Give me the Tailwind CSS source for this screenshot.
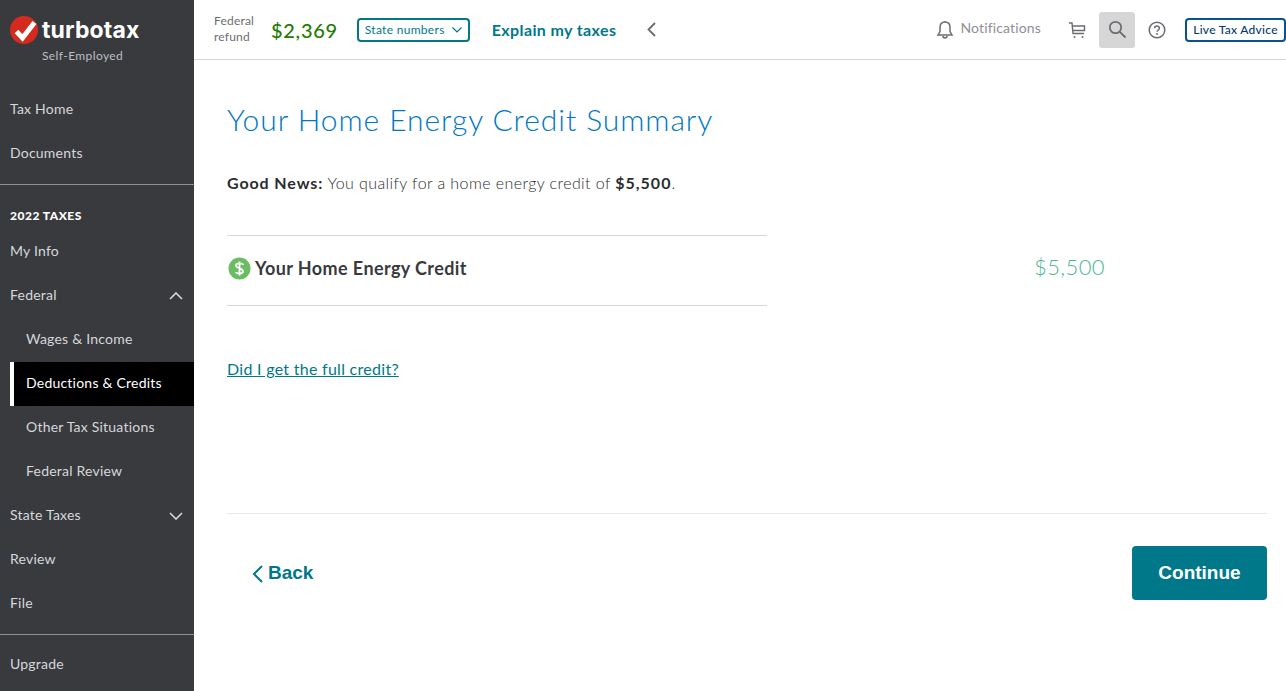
<!DOCTYPE html>
<html>
<head>
<meta charset="utf-8">
<script src="https://cdn.jsdelivr.net/npm/@tailwindcss/browser@4"></script>
</head>
<body class="m-0 bg-white font-['Lato','Noto_Sans',sans-serif] overflow-hidden">
<div class="flex w-[1286px] h-[691px]">
  <aside class="w-[194px] h-full shrink-0 bg-[#393a3d] text-[#d4d7dc] text-[14px] tracking-[0.22px] flex flex-col">
    <div class="h-[87px] pl-[10px] pt-[15px] shrink-0">
      <div class="flex items-center h-[30px]">
        <svg width="28" height="28" viewBox="0 0 28 28" class="shrink-0"><circle cx="14" cy="14" r="14" fill="#d52b1e"/><path d="M6.5 15.5 L12.5 22 L24.5 6.5" fill="none" stroke="#fff" stroke-width="5"/></svg>
        <span class="ml-[4px] text-[23px] font-bold text-white leading-none font-['Inter',sans-serif] tracking-[0.15px]">turbotax</span>
      </div>
      <div class="pl-[32px] mt-[3px] text-[12px] leading-[16px] text-[#babec5] tracking-[0.4px]">Self-Employed</div>
    </div>
    <a class="h-[44px] pb-[2px] flex items-center pl-[10px] shrink-0">Tax Home</a>
    <a class="h-[44px] pb-[2px] flex items-center pl-[10px] shrink-0">Documents</a>
    <div class="h-px bg-[#8d9096] mt-[9px] shrink-0"></div>
    <div class="h-[30px] mt-[16px] flex items-center pl-[10px] text-[12px] font-black text-white tracking-[0.5px] shrink-0">2022 TAXES</div>
    <a class="h-[44px] mt-[-1px] pb-[3px] flex items-center pl-[10px] shrink-0">My Info</a>
    <a class="h-[44px] flex items-center justify-between pl-[10px] pr-[11px] shrink-0"><span class="mb-[3px]">Federal</span>
      <svg width="14" height="8" viewBox="0 0 14 8"><path d="M1 7 L7 1 L13 7" fill="none" stroke="#d4d7dc" stroke-width="1.6"/></svg></a>
    <a class="h-[44px] pb-[3px] flex items-center pl-[26px] shrink-0">Wages &amp; Income</a>
    <a class="h-[44px] pb-[3px] flex items-center pl-[12px] ml-[10px] bg-black text-white border-l-4 border-white shrink-0">Deductions &amp; Credits</a>
    <a class="h-[44px] pb-[3px] flex items-center pl-[26px] shrink-0">Other Tax Situations</a>
    <a class="h-[44px] pb-[3px] flex items-center pl-[26px] shrink-0">Federal Review</a>
    <a class="h-[44px] flex items-center justify-between pl-[10px] pr-[11px] shrink-0"><span class="mb-[3px]">State Taxes</span>
      <svg width="14" height="8" viewBox="0 0 14 8"><path d="M1 1 L7 7 L13 1" fill="none" stroke="#d4d7dc" stroke-width="1.6"/></svg></a>
    <a class="h-[44px] pb-[3px] flex items-center pl-[10px] shrink-0">Review</a>
    <a class="h-[44px] pb-[3px] flex items-center pl-[10px] shrink-0">File</a>
    <div class="h-px bg-[#8d9096] mt-[8px] shrink-0"></div>
    <a class="h-[44px] mt-[8px] pb-[3px] flex items-center pl-[10px] shrink-0">Upgrade</a>
  </aside>
  <div class="flex-1 min-w-0 flex flex-col">
    <header class="h-[60px] shrink-0 border-b border-[#d4d7dc] flex items-center pl-[20px] pr-0">
      <div class="w-[42px] text-[12px] leading-[16px] text-[#6b6c72] mt-[-1px] tracking-[0.2px]">Federal refund</div>
      <div class="ml-[15px] text-[20px] font-medium text-[#237a00] tracking-[0.7px] leading-none">$2,369</div>
      <button class="ml-[19px] w-[113px] h-[24px] border-2 border-[#00788a] rounded-[4px] flex items-center pl-[6px] text-[12px] text-[#00788a] tracking-[0.3px]">State numbers
        <svg class="ml-[7px]" width="10" height="6" viewBox="0 0 10 6"><path d="M0.5 0.5 L5 5 L9.5 0.5" fill="none" stroke="#00788a" stroke-width="1.2"/></svg></button>
      <a class="ml-[22px] text-[16px] font-bold text-[#00788a] leading-none tracking-[0.38px]">Explain my taxes</a>
      <svg class="ml-[31px]" width="9" height="15" viewBox="0 0 9 15"><path d="M8 1 L1.5 7.5 L8 14" fill="none" stroke="#6b6c72" stroke-width="1.8"/></svg>
      <div class="ml-auto flex items-center">
        <svg width="18" height="20" viewBox="0 0 18 20"><path d="M9 2 C5.5 2 4 4.5 4 7.5 V11.5 L2 15 H16 L14 11.5 V7.5 C14 4.5 12.5 2 9 2 Z M7 16 C7 18.5 11 18.5 11 16 M9 1 V2" fill="none" stroke="#6b6c72" stroke-width="1.5"/></svg>
        <span class="ml-[6px] text-[14px] text-[#8d9096] tracking-[0.15px] mt-[-5px]">Notifications</span>
        <svg class="ml-[27px]" width="18" height="18" viewBox="0 0 18 18"><path d="M1 2 H4 L5 12.5 H16 M4.5 5 H16.5 V9.5 H5" fill="none" stroke="#6b6c72" stroke-width="1.4"/><circle cx="6.5" cy="16" r="1" fill="#6b6c72"/><circle cx="14.5" cy="16" r="1" fill="#6b6c72"/></svg>
        <div class="ml-[13px] w-[36px] h-[36px] bg-[#d6d6d6] rounded-[3px] flex items-center justify-center">
          <svg width="19" height="19" viewBox="0 0 19 19"><circle cx="7.5" cy="7.5" r="5.7" fill="none" stroke="#6b6c72" stroke-width="1.7"/><path d="M11.8 11.8 L17.5 17.5" stroke="#6b6c72" stroke-width="1.9"/></svg>
        </div>
        <svg class="ml-[13px]" width="18" height="18" viewBox="0 0 18 18"><circle cx="9" cy="9" r="7.8" fill="none" stroke="#6b6c72" stroke-width="1.5"/><path d="M6.6 7.2 C6.6 4.2 11.4 4.2 11.4 7.2 C11.4 9 9 9 9 10.8" fill="none" stroke="#6b6c72" stroke-width="1.5"/><circle cx="9" cy="13" r="0.95" fill="#6b6c72"/></svg>
        <button class="ml-[19px] w-[101px] h-[24px] border-2 border-[#055393] rounded-[4px] text-[12px] font-medium text-[#053a6b] leading-none whitespace-nowrap tracking-[0.27px]">Live Tax Advice</button>
      </div>
    </header>
    <main class="flex-1 pl-[33px] pr-[19px]">
      <h1 class="text-[30px] leading-[40px] mt-[39px] text-[#0077c5] font-light tracking-[0.93px]">Your Home Energy Credit Summary</h1>
      <p class="mt-[32px] text-[16px] leading-[24px] text-[#2b2c2e] font-light tracking-[0.41px]"><b class="font-bold tracking-[0.9px]">Good News:</b> You qualify for a home energy credit of <b class="font-bold tracking-[1px]">$5,500</b>.</p>
      <div class="mt-[40px] flex items-center w-[878px]">
        <div class="w-[540px] h-[71px] border-y border-[#d4d7dc] flex items-center pl-[1px] pb-[4px]">
          <svg width="23" height="23" viewBox="0 0 23 23"><circle cx="11.5" cy="11.5" r="11" fill="#6bbd62"/><path d="M15 8 C15 6 8 5.5 8 8.5 C8 11.5 15 11 15 14.3 C15 17.5 8 17 8 15 M11.5 4.5 V18.5" fill="none" stroke="#fff" stroke-width="1.8"/></svg>
          <span class="ml-[4px] text-[18px] font-bold text-[#393a3d] tracking-[0.4px]">Your Home Energy Credit</span>
        </div>
        <span class="ml-auto mb-[8px] text-[22px] font-light text-[#4db594] leading-none tracking-[0.4px]">$5,500</span>
      </div>
      <a class="block mt-[51px] text-[16px] leading-[24px] text-[#00788a] underline tracking-[0.28px]">Did I get the full credit?</a>
      <div class="mt-[132px] h-px bg-[#e9e9eb]"></div>
      <div class="flex items-center justify-between mt-[32px]">
        <a class="flex items-center pl-[25px] pt-[1px] text-[19px] font-bold text-[#00788a] font-['Liberation_Sans',sans-serif]">
          <svg class="mr-[5px]" width="11" height="18" viewBox="0 0 11 18"><path d="M10 1 L2 9 L10 17" fill="none" stroke="#00788a" stroke-width="2"/></svg>Back</a>
        <button class="w-[135px] h-[54px] rounded-[4px] bg-[#00788a] text-white text-[19px] font-bold font-['Liberation_Sans',sans-serif]">Continue</button>
      </div>
    </main>
  </div>
</div>
</body>
</html>
